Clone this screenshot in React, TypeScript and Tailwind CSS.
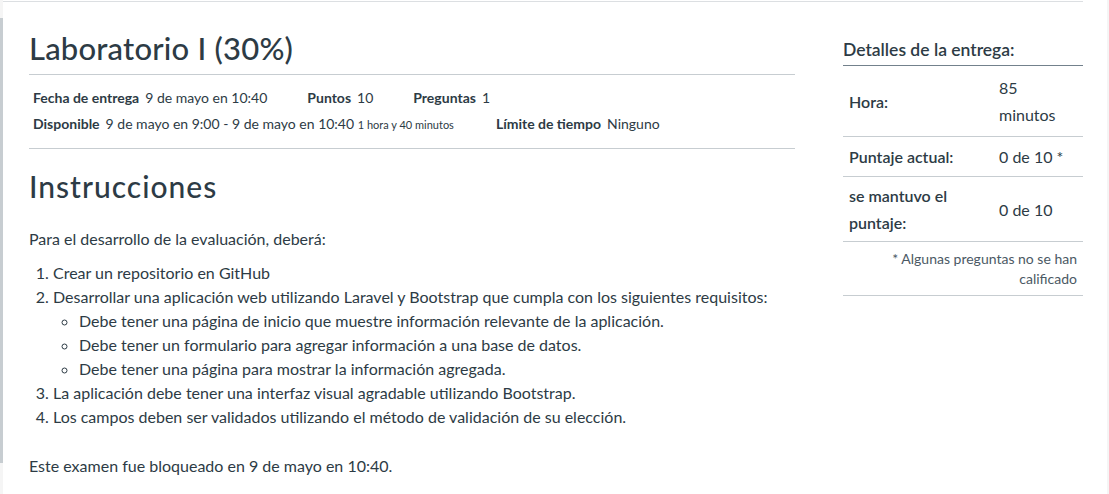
import React from "react";

const infoRowOne = [
  { label: "Fecha de entrega", value: "9 de mayo en 10:40" },
  { label: "Puntos", value: "10" },
  { label: "Preguntas", value: "1" },
];

const steps = [
  "Crear un repositorio en GitHub",
  "Desarrollar una aplicación web utilizando Laravel y Bootstrap que cumpla con los siguientes requisitos:",
  "La aplicación debe tener una interfaz visual agradable utilizando Bootstrap.",
  "Los campos deben ser validados utilizando el método de validación de su elección.",
];

const requirements = [
  "Debe tener una página de inicio que muestre información relevante de la aplicación.",
  "Debe tener un formulario para agregar información a una base de datos.",
  "Debe tener una página para mostrar la información agregada.",
];

export default function App() {
  return (
    <div
      className="flex h-[494px] w-[1109px] overflow-hidden bg-white text-[#2d3b45]"
      style={{ fontFamily: "Lato, 'Liberation Sans', sans-serif" }}
    >
      <div className="w-[3px] shrink-0 bg-[#f5f5f5]">
        <div className="mt-[18px] h-[445px] bg-[#c7cdd1]" />
      </div>

      <div className="mt-[1px] flex w-[1080px] shrink-0 border-t border-[#dcdfe2]">
        <QuizBody />
        <SubmissionDetails />
      </div>

      <div className="flex-1" />
      <div className="w-[2px] shrink-0 bg-[#f5f5f5]" />
    </div>
  );
}

function QuizBody() {
  return (
    <main className="w-[792px] shrink-0 pl-[26px] pt-[27px]">
      <h1 className="text-[31px] font-medium leading-[38px] tracking-[0.2px]">
        Laboratorio I (30%)
      </h1>

      <div className="mt-[7px] border-y border-[#c7cdd1] pb-[10px] pt-[10px] text-[14px] leading-[26px]">
        <div className="flex gap-x-10 pl-[4px]">
          {infoRowOne.map((item) => (
            <span key={item.label}>
              <span className="font-bold">{item.label}</span>
              <span className="ml-[6px]">{item.value}</span>
            </span>
          ))}
        </div>
        <div className="flex gap-x-[42px] pl-[4px]">
          <span>
            <span className="font-bold">Disponible</span>
            <span className="ml-[6px]">
              9 de mayo en 9:00 - 9 de mayo en 10:40{" "}
              <span className="text-[11px]">1 hora y 40 minutos</span>
            </span>
          </span>
          <span>
            <span className="font-bold">Límite de tiempo</span>
            <span className="ml-[6px]">Ninguno</span>
          </span>
        </div>
      </div>

      <h2 className="mt-[19px] text-[30px] font-medium leading-[36px] tracking-[1px]">
        Instrucciones
      </h2>

      <div className="text-[16px] leading-[24px]">
        <p className="mt-[23px]">Para el desarrollo de la evaluación, deberá:</p>

        <ol className="mt-[10px] list-decimal pl-[24px]">
          {steps.map((step, index) => (
            <li key={step}>
              {step}
              {index === 1 && (
                <ul className="list-[circle] pl-[26px]">
                  {requirements.map((item) => (
                    <li key={item}>{item}</li>
                  ))}
                </ul>
              )}
            </li>
          ))}
        </ol>

        <p className="mt-[25px]">Este examen fue bloqueado en 9 de mayo en 10:40.</p>
      </div>
    </main>
  );
}

function SubmissionDetails() {
  return (
    <aside className="ml-[48px] w-[240px] shrink-0 pt-[36px]">
      <h2 className="border-b border-[#73818c] pb-[3px] text-[17.5px] font-semibold leading-[24px]">
        Detalles de la entrega:
      </h2>

      <table className="w-full text-[16px] leading-[27px]">
        <tbody>
          <tr className="border-b border-[#c7cdd1]">
            <th className="w-[150px] px-[6px] pb-[8px] pt-[8px] text-left font-semibold">
              Hora:
            </th>
            <td className="px-[6px] pb-[8px] pt-[8px]">
              85
              <br />
              minutos
            </td>
          </tr>
          <tr className="border-b border-[#c7cdd1]">
            <th className="px-[6px] py-[6px] text-left font-semibold">
              Puntaje actual:
            </th>
            <td className="px-[6px] py-[6px]">0 de 10 *</td>
          </tr>
          <tr className="border-b border-[#c7cdd1]">
            <th className="px-[6px] py-[5px] text-left font-semibold">
              se mantuvo el
              <br />
              puntaje:
            </th>
            <td className="px-[6px] py-[5px]">0 de 10</td>
          </tr>
        </tbody>
      </table>

      <p className="border-b border-[#c7cdd1] px-[6px] pb-[6px] pt-[7px] text-right text-[14px] leading-[20px] text-[#4b5964]">
        * Algunas preguntas no se han calificado
      </p>
    </aside>
  );
}
